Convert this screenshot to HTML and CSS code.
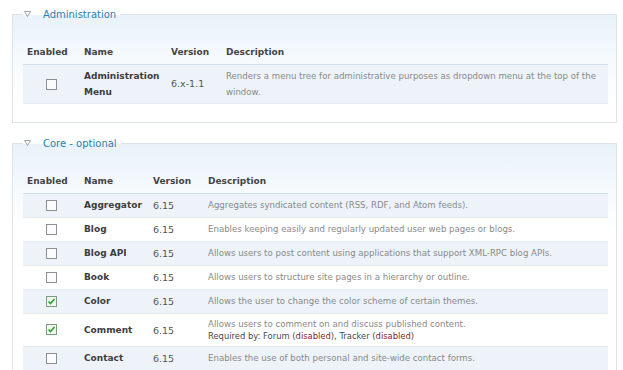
FILE: index.html
```html
<!DOCTYPE html>
<html lang="en">
<head>
    <meta charset="UTF-8">
    <title>Modules</title>
    <link rel="stylesheet" href="styles.css">
</head>
<body>

    <fieldset class="module-group">
        <legend><span class="toggle"><svg width="7" height="6" viewBox="0 0 7 6"><path d="M0.5 0.5 H6.5 L3.5 5.5 Z" fill="#fff" stroke="#a0a4a8" stroke-width="1"/></svg></span>Administration</legend>
        <table class="modules admin-table">
            <colgroup>
                <col class="col-enabled">
                <col class="col-name">
                <col class="col-version">
                <col>
            </colgroup>
            <thead>
                <tr><th>Enabled</th><th>Name</th><th>Version</th><th>Description</th></tr>
            </thead>
            <tbody>
                <tr class="odd">
                    <td class="checkbox"><span class="box"></span></td>
                    <td class="name">Administration Menu</td>
                    <td class="version">6.x-1.1</td>
                    <td class="description">Renders a menu tree for administrative purposes as dropdown menu at the top of the window.</td>
                </tr>
            </tbody>
        </table>
    </fieldset>

    <fieldset class="module-group">
        <legend><span class="toggle"><svg width="7" height="6" viewBox="0 0 7 6"><path d="M0.5 0.5 H6.5 L3.5 5.5 Z" fill="#fff" stroke="#a0a4a8" stroke-width="1"/></svg></span>Core - optional</legend>
        <table class="modules core-table">
            <colgroup>
                <col class="col-enabled">
                <col class="col-name">
                <col class="col-version">
                <col>
            </colgroup>
            <thead>
                <tr><th>Enabled</th><th>Name</th><th>Version</th><th>Description</th></tr>
            </thead>
            <tbody>
                <tr class="odd">
                    <td class="checkbox"><span class="box"></span></td>
                    <td class="name">Aggregator</td>
                    <td class="version">6.15</td>
                    <td class="description">Aggregates syndicated content (RSS, RDF, and Atom feeds).</td>
                </tr>
                <tr class="even">
                    <td class="checkbox"><span class="box"></span></td>
                    <td class="name">Blog</td>
                    <td class="version">6.15</td>
                    <td class="description">Enables keeping easily and regularly updated user web pages or blogs.</td>
                </tr>
                <tr class="odd">
                    <td class="checkbox"><span class="box"></span></td>
                    <td class="name">Blog API</td>
                    <td class="version">6.15</td>
                    <td class="description">Allows users to post content using applications that support XML-RPC blog APIs.</td>
                </tr>
                <tr class="even">
                    <td class="checkbox"><span class="box"></span></td>
                    <td class="name">Book</td>
                    <td class="version">6.15</td>
                    <td class="description">Allows users to structure site pages in a hierarchy or outline.</td>
                </tr>
                <tr class="odd">
                    <td class="checkbox"><span class="box checked"><svg width="9" height="9" viewBox="0 0 9 9"><path d="M1.5 4.5 L3.5 6.5 L7.5 2" fill="none" stroke="#2ea02e" stroke-width="1.6"/></svg></span></td>
                    <td class="name">Color</td>
                    <td class="version">6.15</td>
                    <td class="description">Allows the user to change the color scheme of certain themes.</td>
                </tr>
                <tr class="even">
                    <td class="checkbox"><span class="box checked"><svg width="9" height="9" viewBox="0 0 9 9"><path d="M1.5 4.5 L3.5 6.5 L7.5 2" fill="none" stroke="#2ea02e" stroke-width="1.6"/></svg></span></td>
                    <td class="name">Comment</td>
                    <td class="version">6.15</td>
                    <td class="description with-deps">Allows users to comment on and discuss published content.
                        <div class="dependencies">Required by: Forum (<span class="disabled">disabled</span>), Tracker (<span class="disabled">disabled</span>)</div>
                    </td>
                </tr>
                <tr class="odd">
                    <td class="checkbox"><span class="box"></span></td>
                    <td class="name">Contact</td>
                    <td class="version">6.15</td>
                    <td class="description">Enables the use of both personal and site-wide contact forms.</td>
                </tr>
            </tbody>
        </table>
    </fieldset>

</body>
</html>
```

FILE: styles.css
```css
body {
    margin: 0;
    padding: 0;
    background: #fff;
    font-family: "DejaVu Sans", Verdana, sans-serif;
    color: #494949;
}

.module-group {
    margin: 7px 6px 13px 12px;
    padding: 19px 8px 18px 10px;
    border: 1px solid #dde3e9;
    background: linear-gradient(#e9f2fa, #f6fafd 45px, #fff 90px);
    min-width: 0;
}

.module-group legend {
    padding: 0 4px 0 1px;
    font-size: 10px;
    line-height: 14px;
    color: #2b7fab;
}

.toggle {
    display: inline-block;
    width: 19px;
    vertical-align: 1px;
}

.modules {
    width: 100%;
    table-layout: fixed;
    border-collapse: collapse;
    font-size: 9px;
}

.col-enabled { width: 57px; }
.col-version { width: 55px; }
.admin-table .col-name { width: 87px; }
.core-table .col-name { width: 69px; }

.modules th {
    text-align: left;
    padding: 4px 4px;
    line-height: 15px;
    font-weight: bold;
    color: #444;
    border-bottom: 1px solid #d2e0ec;
}

.modules td {
    padding: 4px 4px;
    line-height: 15px;
    vertical-align: middle;
}

.admin-table td {
    line-height: 16px;
    padding: 3px 4px;
}

.modules tr.odd { background: #edf3f9; }
.modules tr.even { background: #fff; }
.modules tbody tr { border-bottom: 1px solid #e4ebf1; }

.modules td.checkbox {
    text-align: center;
    padding-top: 3px;
}

.box {
    display: inline-block;
    width: 9px;
    height: 9px;
    border: 1px solid #8c9094;
    background: #fbfbfb;
    vertical-align: middle;
    position: relative;
}

.box svg {
    position: absolute;
    left: 0;
    top: 0;
}

.box.checked {
    border-color: #7d9b7d;
    background: #f0f7f0;
}

.name {
    font-weight: bold;
    color: #3d3d3d;
}

.version {
    font-size: 9.5px;
    color: #555;
}

.modules td.description {
    font-size: 8.6px;
    color: #898989;
    padding-right: 2px;
}

.modules td.with-deps {
    line-height: 13px;
}

.dependencies {
    font-size: 8.4px;
    line-height: 11px;
    color: #494949;
}

.disabled {
    color: #8a2424;
}
```
